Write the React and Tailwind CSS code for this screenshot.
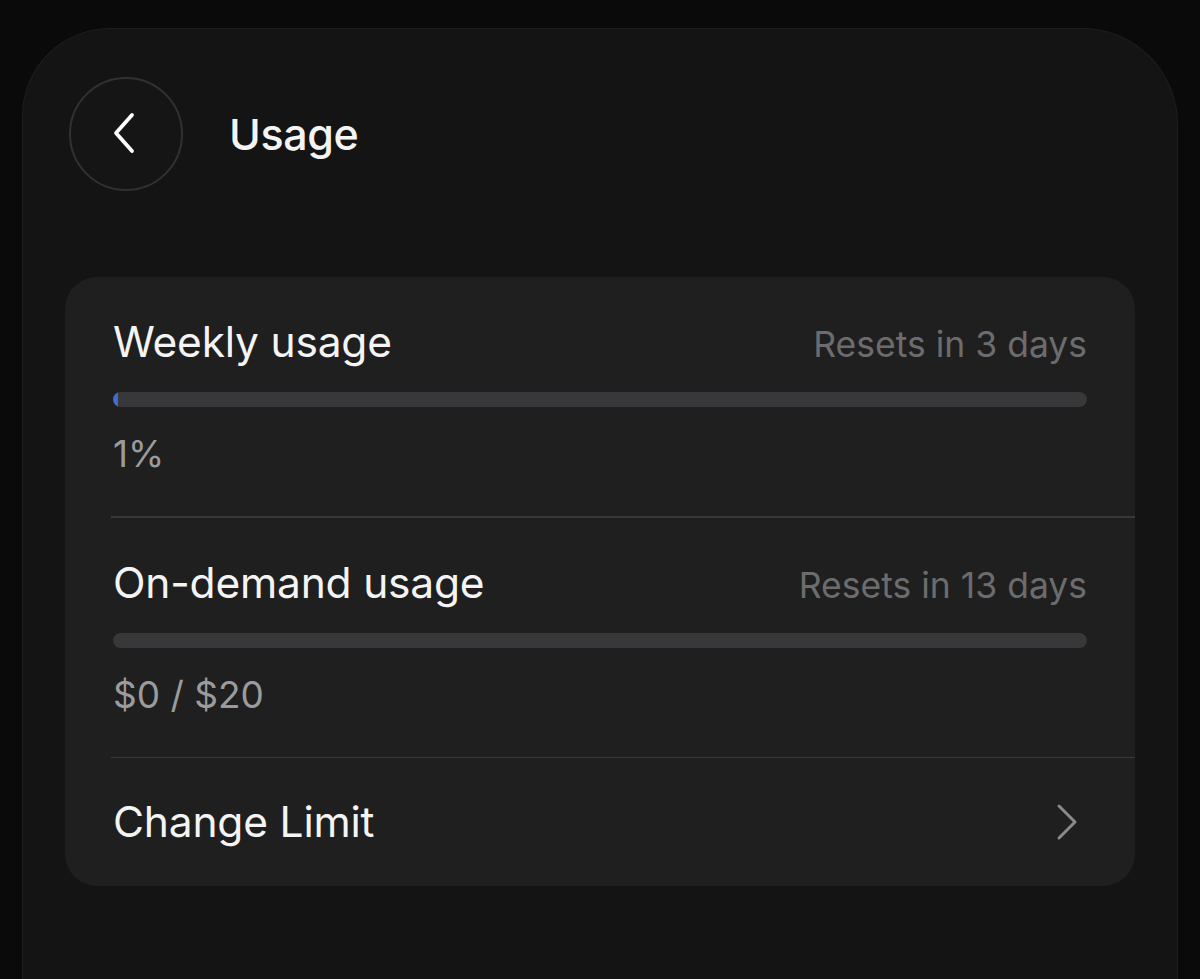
import React from "react";

function Section({ title, reset, value, pct }) {
  return (
    <div className="pt-[39px] pb-[39px] pl-[48px] pr-[48px]">
      <div className="h-[52px] flex items-baseline justify-between overflow-visible">
        <span className="text-[42.5px] leading-[52px] text-[#f4f4f4] tracking-[-0.2px]">{title}</span>
        <span className="text-[35.5px] leading-[52px] text-[#6c6c6e]">{reset}</span>
      </div>
      <div className="mt-[24px] h-[15px] rounded-full bg-[#38383a] overflow-hidden">
        {pct > 0 && <div className="h-full w-[5px] rounded-l-full bg-[#3d6ad6]" />}
      </div>
      <div className="mt-[24px] h-[46px] text-[37px] leading-[46px] text-[#9b9b9d]">{value}</div>
    </div>
  );
}

export default function App() {
  return (
    <div
      className="w-[1200px] h-[979px] bg-[#0a0a0a] overflow-hidden pt-[28px] pl-[22px] pr-[22px]"
      style={{ fontFamily: "Inter, 'Noto Sans', sans-serif" }}
    >
      <div className="h-[951px] bg-[#141414] rounded-tl-[88px] rounded-tr-[96px] border border-[#1e1e1e] border-b-0 pt-[48px] pl-[46px] pr-[42px]">
        <div className="flex items-center">
          <div className="w-[114px] h-[114px] rounded-full border-2 border-[#313131] bg-[#151515] flex items-center justify-center">
            <svg width="30" height="46" viewBox="0 0 30 46" fill="none">
              <path d="M21 4 L5 22 L21 40" stroke="#ffffff" strokeWidth="3.8" strokeLinecap="round" strokeLinejoin="round" />
            </svg>
          </div>
          <div className="ml-[46px] text-[43px] leading-[52px] font-medium text-[#f4f4f4] tracking-[-0.4px]">Usage</div>
        </div>
        <div className="mt-[86px] -ml-[4px] rounded-[32px] bg-[#1f1f1f]">
          <Section title="Weekly usage" reset="Resets in 3 days" value="1%" pct={1} />
          <div className="ml-[46px] h-[1.5px] bg-[#38383a]" />
          <Section title="On-demand usage" reset="Resets in 13 days" value="$0 / $20" pct={0} />
          <div className="ml-[46px] h-[1.5px] bg-[#38383a]" />
          <div className="h-[128px] flex items-center justify-between pl-[48px] pr-[56px]">
            <span className="text-[42.5px] leading-[52px] text-[#f4f4f4] tracking-[-0.2px]">Change Limit</span>
            <svg width="24" height="38" viewBox="0 0 24 38" fill="none">
              <path d="M4 3 L20 19 L4 35" stroke="#8a8a8c" strokeWidth="3" strokeLinecap="round" strokeLinejoin="round" />
            </svg>
          </div>
        </div>
      </div>
    </div>
  );
}
